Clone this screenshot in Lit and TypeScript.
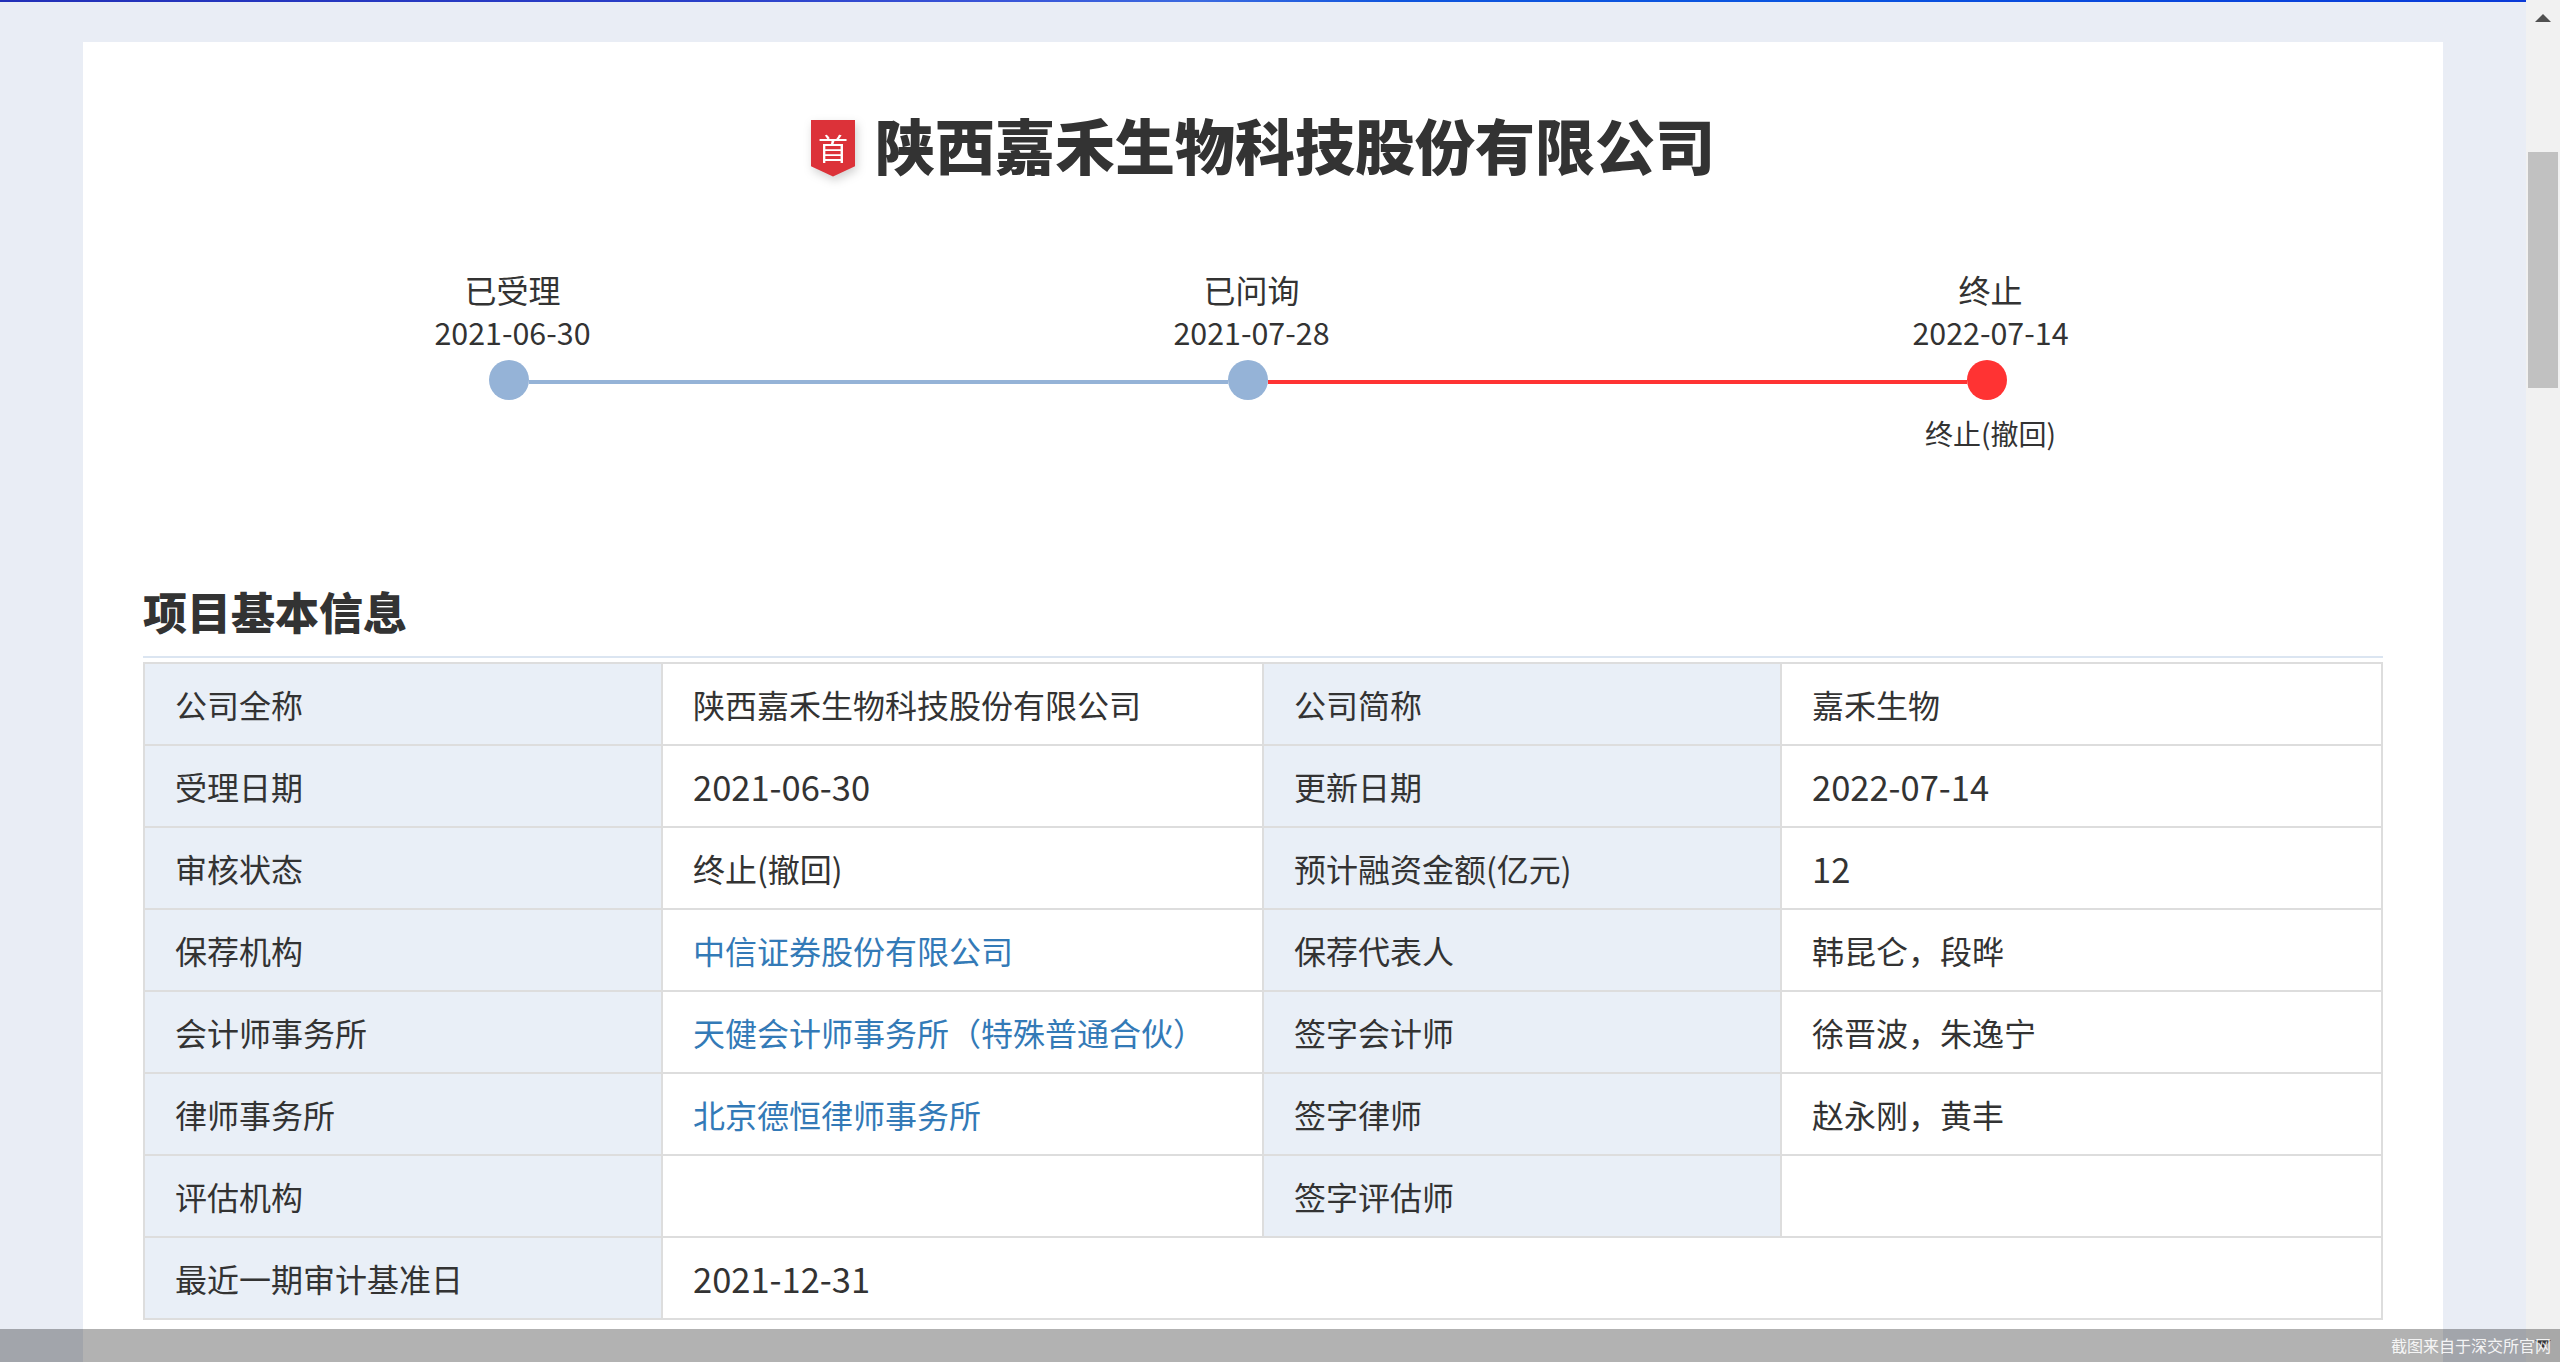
import { LitElement, html, css } from "lit";
import { customElement } from "lit/decorators.js";

type Cell = { label: string; value?: string; link?: boolean; num?: boolean };
const rows: Cell[][] = [
  [{ label: "公司全称", value: "陕西嘉禾生物科技股份有限公司" }, { label: "公司简称", value: "嘉禾生物" }],
  [{ label: "受理日期", value: "2021-06-30", num: true }, { label: "更新日期", value: "2022-07-14", num: true }],
  [{ label: "审核状态", value: "终止(撤回)" }, { label: "预计融资金额(亿元)", value: "12", num: true }],
  [{ label: "保荐机构", value: "中信证券股份有限公司", link: true }, { label: "保荐代表人", value: "韩昆仑，段晔" }],
  [{ label: "会计师事务所", value: "天健会计师事务所（特殊普通合伙）", link: true }, { label: "签字会计师", value: "徐晋波，朱逸宁" }],
  [{ label: "律师事务所", value: "北京德恒律师事务所", link: true }, { label: "签字律师", value: "赵永刚，黄丰" }],
  [{ label: "评估机构", value: "" }, { label: "签字评估师", value: "" }],
];

const steps = [
  { name: "已受理", date: "2021-06-30", state: "" },
  { name: "已问询", date: "2021-07-28", state: "" },
  { name: "终止", date: "2022-07-14", state: "终止(撤回)" },
];

@customElement("app-root")
export class AppRoot extends LitElement {
  static styles = css`
    :host {
      display: flex;
      position: relative;
      height: 1362px;
      overflow: hidden;
      background: #e9edf5;
      color: #333;
      font-family: "Noto Sans CJK SC", "Noto Sans", sans-serif;
    }
    .main { flex: 1; min-width: 0; display: flex; flex-direction: column; }
    .topbar {
      height: 2px;
      flex: none;
      background: linear-gradient(90deg, #2230b8 0, #2a3fc8 700px, #3a55d8 1000px, #3b6ae0 1200px, #0f55dd 1400px, #0a55e0 1800px, #0a3ad8 2526px);
    }
    .card {
      flex: 1;
      margin: 40px 83px 0;
      background: #fff;
      padding: 62px 60px 0;
    }
    .title {
      display: flex;
      justify-content: center;
      align-items: center;
      gap: 20px;
      height: 80px;
    }
    .title h1 { margin: 0; font-size: 60px; line-height: 80px; font-weight: 900; color: #333; }
    .badge-wrap { filter: drop-shadow(2px 4px 5px rgba(0, 0, 0, 0.18)); margin-top: 8px; }
    .badge {
      width: 44px;
      height: 57px;
      background: #dc3239;
      color: #fff;
      font-size: 30px;
      line-height: 54px;
      text-align: center;
      clip-path: polygon(0 0, 100% 0, 100% 82%, 50% 100%, 0 82%);
    }
    .timeline { margin-top: 85px; }
    .labels { display: grid; grid-template-columns: repeat(3, 739px); }
    .step { display: flex; flex-direction: column; align-items: center; }
    .step .name { font-size: 32px; line-height: 40px; }
    .step .date { font-size: 30.4px; line-height: 40px; margin-top: 3px; }
    .track { display: flex; align-items: center; margin: 8px 0 0 346px; }
    .dot { width: 40px; height: 40px; border-radius: 50%; flex: none; background: #95b3d7; }
    .dot.red { background: #ff3333; }
    .line { width: 699px; height: 4px; margin-top: 4px; background: #95b3d7; }
    .line.red { background: #ff3333; }
    .states { display: grid; grid-template-columns: repeat(3, 739px); margin-top: 13px; height: 40px; }
    .states div { text-align: center; font-size: 28px; line-height: 40px; }
    h2 {
      margin: 128px 0 0;
      font-size: 44px;
      line-height: 60px;
      font-weight: 900;
      padding-bottom: 15px;
      border-bottom: 2px solid #dbe5f1;
      color: #333;
    }
    table {
      border-collapse: collapse;
      table-layout: fixed;
      width: 2240px;
      margin-top: 4px;
      font-size: 32px;
    }
    td {
      border: 2px solid #ddd;
      height: 80px;
      padding: 0 30px;
      line-height: 44px;
      box-sizing: content-box;
    }
    td.k { background: #e9eff7; }
    .num { font-size: 34.5px; }
    a { color: #337ab7; text-decoration: none; }
    .scrollbar {
      width: 34px;
      flex: none;
      background: #f1f1f1;
      display: flex;
      flex-direction: column;
      align-items: center;
    }
    .scrollbar svg { display: block; flex: none; }
    .arrow-up { margin-top: 14px; }
    .thumb { width: 30px; height: 236px; margin-top: 130px; background: #c1c1c1; flex: none; }
    .arrow-down { margin-top: auto; margin-bottom: 14px; }
    .watermark {
      position: absolute;
      left: 0;
      right: 0;
      bottom: 0;
      height: 33px;
      background: rgba(0, 0, 0, 0.3);
      color: rgba(255, 255, 255, 0.9);
      font-size: 16px;
      line-height: 33px;
      text-align: right;
      padding-right: 9px;
      box-sizing: border-box;
    }
  `;

  render() {
    return html`
      <div class="main">
        <div class="topbar"></div>
        <div class="card">
          <div class="title">
            <div class="badge-wrap"><div class="badge">首</div></div>
            <h1>陕西嘉禾生物科技股份有限公司</h1>
          </div>
          <div class="timeline">
            <div class="labels">
              ${steps.map(
                (s) => html`<div class="step"><div class="name">${s.name}</div><div class="date">${s.date}</div></div>`
              )}
            </div>
            <div class="track">
              <div class="dot"></div>
              <div class="line"></div>
              <div class="dot"></div>
              <div class="line red"></div>
              <div class="dot red"></div>
            </div>
            <div class="states">${steps.map((s) => html`<div>${s.state}</div>`)}</div>
          </div>
          <h2>项目基本信息</h2>
          <table>
            <colgroup>
              <col style="width:518px" /><col style="width:601px" /><col style="width:518px" /><col style="width:601px" />
            </colgroup>
            <tbody>
              ${rows.map(
                (r) => html`<tr>
                  ${r.map(
                    (c) => html`<td class="k">${c.label}</td>
                      <td class=${c.num ? "num" : ""}>${c.link ? html`<a href="#">${c.value}</a>` : c.value}</td>`
                  )}
                </tr>`
              )}
              <tr>
                <td class="k">最近一期审计基准日</td>
                <td colspan="3" class="num">2021-12-31</td>
              </tr>
            </tbody>
          </table>
        </div>
      </div>
      <div class="scrollbar">
        <svg class="arrow-up" width="16" height="8" viewBox="0 0 16 8"><path d="M8 0L16 8H0Z" fill="#505050" /></svg>
        <div class="thumb"></div>
        <svg class="arrow-down" width="16" height="8" viewBox="0 0 16 8"><path d="M0 0H16L8 8Z" fill="#505050" /></svg>
      </div>
      <div class="watermark">截图来自于深交所官网</div>
    `;
  }
}
